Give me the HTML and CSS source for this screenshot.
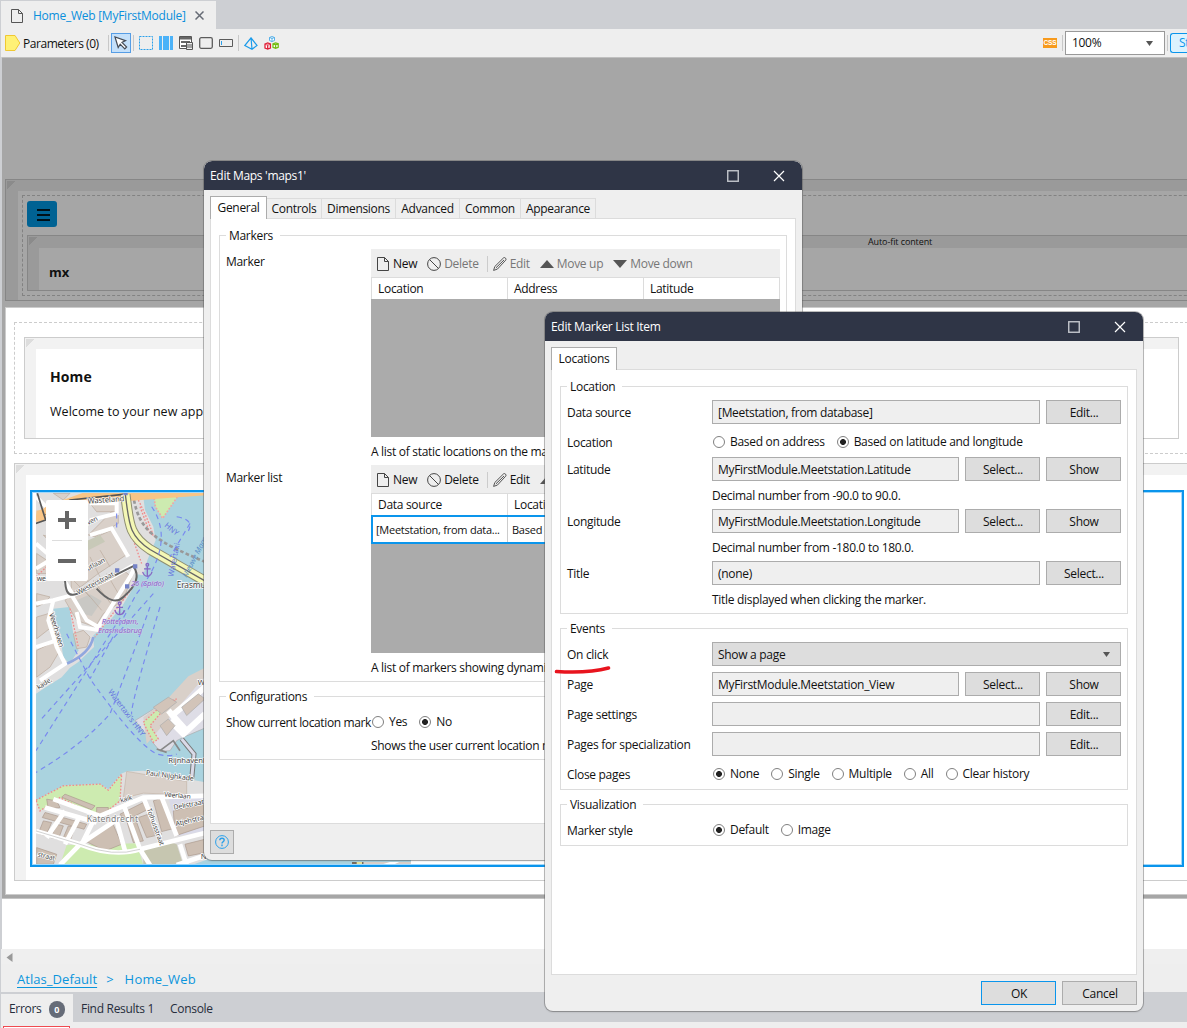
FILE: index.html
```html
<!DOCTYPE html>
<html lang="en">
<head>
<meta charset="utf-8">
<title>Home_Web [MyFirstModule]</title>
<link rel="stylesheet" href="styles.css">
</head>
<body>
<svg class="defs" width="0" height="0" aria-hidden="true">
  <symbol id="doc" viewBox="0 0 12 14"><path d="M.5.5h7l4 4v9H.5zM7.500.5v4h4" fill="none" stroke="currentColor"/></symbol>
  <symbol id="ban" viewBox="0 0 14 14"><circle cx="7" cy="7" r="6.400" fill="none" stroke="currentColor"/><path d="M2.600 2.600l8.800 8.800" stroke="currentColor"/></symbol>
  <symbol id="pencil" viewBox="0 0 14 14"><path d="M.6 13.400l1.200-3.900L10.500.9q1.100-.8 2.100.3.900 1 .1 2L4.400 12.100z M2.900 10.900L11 3" fill="none" stroke="currentColor" stroke-width=".9"/></symbol>
</svg>

<div class="app">
  <header class="doctabs">
    <div class="doctab"><svg class="doc-icon" width="12" height="14"><use href="#doc"/></svg><span>Home_Web [MyFirstModule]</span><svg width="9" height="9" viewBox="0 0 9 9"><path d="M.5.5l8 8M8.500.5l-8 8" stroke="#666b75" stroke-width="1.500"/></svg></div>
  </header>

  <div class="toolbar">
    <svg width="16" height="16" viewBox="0 0 16 16"><path d="M.5.500h9.500l4.800 7.500-4.800 7.500H.5z" fill="#fff176" stroke="#f0c832"/></svg>
    <span class="params">Parameters (0)</span>
    <i class="sep"></i>
    <span class="tool-on"><svg width="16" height="16" viewBox="0 0 16 16"><path d="M2 2l3.200 10.500 2-3.300 4.600 4.600 1.800-1.800-4.600-4.600 3.500-1.800z" fill="#fff" stroke="#454b55" stroke-width="1.200"/></svg></span>
    <i class="sep sep-b"></i>
    <svg class="t1" width="14" height="14"><rect x=".5" y=".5" width="13" height="13" fill="none" stroke="#2ba0ea" stroke-dasharray="2 1"/></svg>
    <svg class="t2" width="14" height="14"><path d="M0 0h3v14H0zM4 0h6v14H4zM11 0h3v14h-3z" fill="#4bb2f8"/></svg>
    <svg class="t3" width="14" height="14" viewBox="0 0 14 14"><path d="M.5.5h12v12H.5z" fill="#fff" stroke="#555"/><path d="M1 1h11v2.500H1zM2 5h9v2H2zM2 9h5v2H2z" fill="#666"/><path d="M7.500 6.500h6v7h-6zM8 9h5M8 11h5" fill="#eee" stroke="#555"/></svg>
    <svg class="t4" width="14" height="12"><rect x=".7" y=".7" width="12.600" height="10.600" rx="1.500" fill="none" stroke="#5b5b5b" stroke-width="1.300"/></svg>
    <svg class="t5" width="14" height="8"><path d="M.5.5h13v7H.5z" fill="none" stroke="#5b5b5b"/><path d="M2.500 2v4" stroke="#2ba0ea"/></svg>
    <i class="sep sep-c"></i>
    <svg class="t6" width="14" height="13" viewBox="0 0 14 13"><path d="M7 .8L.8 8.500 8 12.200l5-3.700zM7 .8l1 11.400" fill="none" stroke="#1b9bea" stroke-width="1.200"/></svg>
    <svg class="t7" width="15" height="14" viewBox="0 0 15 14"><g fill="#fff"><path d="M5.500 1.500L8 .5l2.500 1v3L8 5.500l-2.500-1zM5.500 1.500L8 2.500l2.500-1M8 2.500v3" stroke="#46a9e6" stroke-width=".9"/><path d="M1 8l2.700-1 2.700 1v4l-2.700 1L1 12zM1 8l2.700 1 2.700-1M3.700 9v4" stroke="#e01e37" stroke-width="1.300"/><path d="M9 7.800l2.600-.9 2.600.9v3.500l-2.600.9-2.600-.9zM9 7.800l2.600.9 2.600-.9M11.600 8.700v3.500" stroke="#73bd14" stroke-width="1.300"/></g></svg>
    <span class="grow"></span>
    <span class="css-badge">CSS</span>
    <i class="sep"></i>
    <span class="zoom-box">100%<svg width="8" height="5"><path d="M0 0h7L3.500 5z" fill="#555"/></svg></span>
    <i class="sep sep-d"></i>
    <span class="mode-btn">Structure</span>
  </div>

  <main class="canvas">
    <section class="head-region">
      <div class="block outer">
        <div class="dash dark">
          <div class="burger"><i></i><i></i><i></i></div>
          <div class="block inner">
            <span class="autofit">Auto-fit content</span>
            <div class="block-body"><b>mx</b></div>
          </div>
        </div>
      </div>
    </section>
    <section class="page">
      <div class="dash light"><div class="slot"><div class="slot-body"><h1>Home</h1><p>Welcome to your new app</p></div></div></div>
      <div class="slot map-slot"><div class="slot-body">
        <div class="map">
          <svg class="tiles" width="375" height="372" viewBox="78 96 1125 1116" preserveAspectRatio="none">
            <rect x="78" y="96" width="1125" height="1116" fill="#aad3df"/>
            <path d="M78 96H398L405 150 430 200 437 240 412 300 400 345 382 342 365 390 335 440 300 480 250 525 252 560 205 605 180 622 155 650 105 682 78 700Z" fill="#e0dfdf"/>
            <path d="M430 96H512L458 175 436 140Z" fill="#cdebb0" stroke="#f1a4a4" stroke-width="5" stroke-dasharray="5 5"/>
            <path d="M130 445L178 440 190 520 206 570 178 610 160 590 150 530Z" fill="#aad3df"/>
            <path d="M170 610Q240 580 250 530" stroke="#91a7de" stroke-width="8" fill="none"/>
            <g fill="#d9d0c9" stroke="#b9a99c" stroke-width="2">
              <path d="M235 225l70-70 20 5v30l-70 40zM130 100l50 0-20 20zM180 300l80-70 45-20 50 70-90 60-80 60zM190 400l70-40 80-30 25 20-25 70-60 40-25 40-55-20-35-60zM240 130h80v25h-60zM80 470l35-10 10 40-45 35zM80 570l50-25 20 25-30 50-40 30zM80 280l30 20v40H80zM100 225l60 20v40z"/>
              <path d="M190 520l30-10 20 20-10 30-30 5zM80 400l40 10-20 20-20 10z"/>
            </g>
            <path d="M200 420l40-18 35 20-30 45-40-10z" fill="#c9c8c4"/>
            <path d="M225 245l45-20 15 20-50 25z" fill="#c8c9b8"/>
            <g fill="none" stroke="#b9a99c" stroke-width="2"><path d="M205 320l30 45M240 290l30 60M270 270l30 50M180 350l60 60M290 340l35 60M250 360l60 80M215 380l60 70"/></g>
            <g fill="none" stroke="#fff" stroke-width="12">
              <path d="M78 430L130 420 185 405 230 480 265 500 360 350 375 320M165 365L190 405 300 355 370 315M240 225L305 205 355 290M130 420L115 480 140 560 165 610 90 660M78 560L140 540M78 250L170 330M200 455l10 45 60 10M78 325l50-30M78 110l100 100M240 180l80-20v-30h-80"/>
            </g>
            <g fill="none" stroke="#f08b8b" stroke-width="4" stroke-dasharray="5 5"><path d="M385 120Q420 190 430 230M370 240L395 310M365 385L255 530M180 445L205 560M78 350L120 310M390 140L420 220"/></g>
            <path d="M372 120C390 210 430 240 585 305" fill="none" stroke="#999" stroke-width="8" stroke-dasharray="11 7"/>
            <path d="M78 168Q100 170 120 152L225 114 345 107 480 96 600 88" fill="none" stroke="#f9c586" stroke-width="34"/>
            <path d="M82 100l25 80-30 10M107 165L180 120 340 103" fill="none" stroke="#555" stroke-width="5"/>
            <path d="M346 104C358 190 355 225 420 268L590 365" fill="none" stroke="#8f8f72" stroke-width="31"/>
            <path d="M346 104C358 190 355 225 420 268L590 365" fill="none" stroke="#f4f7b5" stroke-width="25"/>
            <path d="M346 104C358 190 355 225 420 268L590 365" fill="none" stroke="#666" stroke-width="4"/>
            <path d="M165 360C170 440 200 400 370 318Q400 360 340 410 310 440 260 385" fill="none" stroke="#666" stroke-width="6"/>
            <g fill="#7583c7"><path d="M315 324h13v13h-13zM369 312h13v13h-13zM345 372h13v13h-13zM340 94h13v12h-13z"/></g>

            <path d="M590 618L520 690 375 780 450 872 480 870 500 840 520 830 590 800Z" fill="#dedde6" stroke="#aaa" stroke-width="2"/>
            <path d="M400 770l75-58 60-65 50-25v25L410 850z" fill="#d9d0c9"/>
            <path d="M400 785l60-55 40-15-50 45-30 35 25 40-15 10z" fill="#cdebb0" stroke="#f08b8b" stroke-width="4" stroke-dasharray="5 5"/>
            <path d="M480 770l60-50 50-45M480 780l40 40 65-60M475 750l50 55" fill="none" stroke="#fff" stroke-width="18"/>
            <path d="M450 795l25-20 20 20-25 30zM515 740l50-40 20 15-55 50zM430 740l45-30 25 15-45 35z" fill="#d2c4b9" stroke="#aaa" stroke-width="2"/>
            <path d="M515 835L552 880 545 955" fill="none" stroke="#777" stroke-width="15"/><path d="M515 835L552 880 545 955" fill="none" stroke="#dadae8" stroke-width="9"/>
            <path d="M450 870l40-30 20 30M440 865l30 10" fill="none" stroke="#888" stroke-width="5"/>

            <path d="M78 1018L160 975 270 970 295 985 335 938 350 932 400 930 590 965 590 1212 78 1212Z" fill="#e0dfdf"/>
            <path d="M78 1018L160 975 270 970 295 988 335 940 330 1020 280 1060 230 1050 150 1010 90 1050z" fill="#cdebb0" stroke="#f08b8b" stroke-width="4" stroke-dasharray="5 5"/>
            <path d="M150 1212l20-60 210-5 20 65z" fill="#cdebb0"/>
            <path d="M350 932l180 30v40l-130-5-60 15z" fill="#d9d0c9" stroke="#c4b5a8" stroke-width="2"/>
            <path d="M475 1010l110-5v105l-80 15z" fill="#dadae8"/>
            <g fill="#cdbfb3" stroke="#aa998c" stroke-width="2"><path d="M110 1015l30 5 10 20-35 5zM165 1000l90 35-10 12-90-38zM105 1055l125 35-8 15-125-35zM100 1080l25 5-18 40-22-8zM140 1090l20 5-15 40-22-5zM175 1095l20 5-15 40-22-5zM225 1140l80-60 30 70-50 20zM330 1060l70-35 15 20-70 35zM350 1080l25-10 25 70-30 5zM385 1070l30-10 40 60-45 10zM430 1020l25-8 40 90-40 10zM80 1160l60 20-10 30H80zM490 1050l95-20v65l-90 30zM525 1150l60-15v40l-50 10zM260 1040h35v25h-35z"/></g>
            <path d="M400 1170q70-35 100-20l20 62H400z" fill="#c6c6b0"/>
            <g fill="none" stroke="#fff" stroke-width="14"><path d="M78 1110L210 1150Q310 1190 390 1165L590 1115M130 1015L270 1065 400 1010 585 1005M105 1040l155 45M210 1150L330 1070M340 1030L390 1165M400 1010L450 1130M455 1010L500 1125M210 1150L150 1212M165 1050L110 1130M210 1065L165 1150M250 1080L215 1150M320 1080L345 1170M390 1165L420 1212M510 1150L530 1212M500 1212l90-30"/></g>
            <path d="M78 1110L210 1150Q310 1190 390 1165" fill="none" stroke="#bbb" stroke-width="2"/>
            <path d="M545 1212l45-16h405v16z" fill="#aad3df"/>
            <path d="M1026 1203h35v9h-35z" fill="#776b5e"/><path d="M1040 1203h16v9h-16z" fill="#e5e19b"/><path d="M1061 1203h142v9h-142z" fill="#d9d0c9"/><path d="M1110 1212l30-9h28l-20 9z" fill="#fff"/>

            <g fill="none" stroke="#7989ef" stroke-width="3.500" stroke-dasharray="15 12"><path d="M425 140Q500 250 380 400L240 655M450 440Q360 740 365 760M420 440Q370 580 300 760 220 850 78 935M430 400L90 780M345 450L78 870M170 520L240 655Q380 850 440 880 480 890 500 880M540 190L480 290M320 160v50M500 170q60 10 30 50"/></g>
            <g font-family="Noto Sans" font-size="23" fill="#444" stroke="#fff" stroke-width="4" paint-order="stroke">
              <text transform="translate(233 131) rotate(-4)">Wasteland</text>
              <text font-size="20" transform="translate(225 200) rotate(-27)">aven</text>
              <text font-size="21" transform="translate(222 338) rotate(-28)">outlaan</text>
              <text font-size="21" transform="translate(205 404) rotate(-28)">Westerstraat</text>
              <text font-size="21" x="80" y="363">we</text>
              <text font-size="22" transform="translate(117 460) rotate(73)">Veerhaven</text>
              <text x="500" y="383" font-size="25">Erasmusbrug</text>
              <text font-size="20" transform="translate(86 688) rotate(-33)">kade,</text>
              <text x="475" y="906" font-size="23">Rijnhavenbrug</text>
              <text font-size="21" transform="translate(407 943) rotate(7)">Paul Nijghkade</text>
              <text font-size="20" transform="translate(462 1007) rotate(5)">Veerlaan</text>
              <text font-size="21" transform="translate(492 1047) rotate(-11)">Delistraat</text>
              <text font-size="21" transform="translate(498 1096) rotate(-13)">Atjehstraat</text>
              <text font-size="20" transform="translate(410 1045) rotate(70)">Tolhuisstraat</text>
              <text font-size="20" transform="translate(82 1186) rotate(14)">straat</text>
              <text font-size="20" transform="translate(333 1026) rotate(-18)">kaik</text>
              <text x="563" y="672">Wil</text>
              <text x="572" y="1194">N</text>
            </g>
            <text x="230" y="1084" font-family="Noto Sans" font-size="26" fill="#7b7b7b" stroke="#fff" stroke-width="3" paint-order="stroke" textLength="154">Katendrecht</text>
            <g font-family="Noto Sans" font-style="italic" font-size="23" fill="#8461c4" stroke="#ddd8f2" stroke-width="2" paint-order="stroke"><text x="363" y="377">26 (Spido)</text><text x="275" y="490">Rotterdam,</text><text x="264" y="517">Erasmusbrug</text></g>
            <g fill="none" stroke="#8669c4" stroke-width="4"><path d="M412 318v30M402 326h20M398 335q4 13 14 13t14-13M329 433v30M319 441h20M315 450q4 13 14 13t14-13"/><circle cx="412" cy="314" r="4"/><circle cx="329" cy="429" r="4"/></g>
            <g font-family="Noto Sans" font-size="23" fill="#6775de"><text transform="translate(293 694) rotate(53)">Watertaxi's HNY</text><text transform="translate(490 350) rotate(-79)">Watertaxi</text><text transform="translate(462 198) rotate(40)">HNY</text><text fill="#5d8fc9" font-style="italic" transform="translate(530 353) rotate(-62)">Nieuwe Maas</text></g>
          </svg>
          <div class="map-zoom"><span class="plus"></span><span class="minus"></span></div>
        </div>
      </div></div>
    </section>
    <div class="blank"></div>
  </main>

  <div class="hscroll"><svg width="7" height="9"><path d="M6.500 0v9L.5 4.500z" fill="#999"/></svg></div>
  <nav class="crumbs"><u>Atlas_Default</u><span>&gt;</span><span>Home_Web</span></nav>
  <footer class="bottom-tabs"><div class="btab on">Errors<em>0</em></div><div class="btab find">Find Results 1</div><div class="btab">Console</div></footer>
  <div class="bottom-strip"><i></i></div>
</div>

<div class="dialog maps">
  <div class="titlebar"><span>Edit Maps 'maps1'</span><svg class="max" width="12" height="12"><rect x=".75" y=".75" width="10.500" height="10.500" fill="none" stroke="#c3c6cc" stroke-width="1.400"/></svg><svg width="12" height="12"><path d="M1 1l10 10M11 1L1 11" stroke="#fff" stroke-width="1.200"/></svg></div>
  <div class="tabs"><span class="tab active">General</span><span class="tab w-con">Controls</span><span class="tab w-dim">Dimensions</span><span class="tab w-adv">Advanced</span><span class="tab w-com">Common</span><span class="tab w-app">Appearance</span></div>
  <div class="panel">
    <section class="group markers">
      <h2>Markers</h2>
      <div class="mrow"><label>Marker</label><div class="gridbox">
        <div class="gridbar"><span class="gb"><svg width="12" height="14"><use href="#doc"/></svg>New</span><span class="gb off del"><svg width="14" height="14"><use href="#ban"/></svg>Delete</span><span class="gb off edit"><svg width="14" height="14"><use href="#pencil"/></svg>Edit</span><span class="gb off up"><svg width="14" height="8"><path d="M0 8L7 0l7 8z" fill="#555"/></svg>Move up</span><span class="gb off up"><svg width="14" height="8"><path d="M0 0l7 8 7-8z" fill="#555"/></svg>Move down</span></div>
        <div class="gridhead"><span>Location</span><span>Address</span><span>Latitude</span></div>
        <div class="gridfill"></div>
        <p class="hint">A list of static locations on the map.</p>
      </div></div>
      <div class="mrow"><label>Marker list</label><div class="gridbox">
        <div class="gridbar"><span class="gb"><svg width="12" height="14"><use href="#doc"/></svg>New</span><span class="gb del"><svg width="14" height="14"><use href="#ban"/></svg>Delete</span><span class="gb edit"><svg width="14" height="14"><use href="#pencil"/></svg>Edit</span><span class="gb off up"><svg width="14" height="8"><path d="M0 8L7 0l7 8z" fill="#555"/></svg></span></div>
        <div class="gridhead"><span>Data source</span><span>Location</span><span></span></div>
        <div class="gridsel"><span>[Meetstation, from data...</span><span>Based on</span></div>
        <div class="gridfill short"></div>
        <p class="hint">A list of markers showing dynamic</p>
      </div></div>
    </section>
    <section class="group config">
      <h2>Configurations</h2>
      <div class="crow"><label>Show current location mark</label><div class="radios"><span><i class="radio"></i>Yes</span><span><i class="radio sel"></i>No</span></div></div>
      <p>Shows the user current location m</p>
    </section>
  </div>
  <div class="help"><svg width="14" height="14" viewBox="0 0 14 14"><circle cx="7" cy="7" r="6.400" fill="none" stroke="#2ba0ea"/><path d="M4.800 5.300q0-2 2.200-2t2.200 1.800q0 1-1.200 1.700-1 .6-1 1.700M7 9.600v1.600" fill="none" stroke="#2ba0ea" stroke-width="1.400"/></svg></div>
</div>

<div class="dialog item">
  <div class="titlebar"><span>Edit Marker List Item</span><svg class="max" width="12" height="12"><rect x=".75" y=".75" width="10.500" height="10.500" fill="none" stroke="#c3c6cc" stroke-width="1.400"/></svg><svg width="12" height="12"><path d="M1 1l10 10M11 1L1 11" stroke="#fff" stroke-width="1.200"/></svg></div>
  <div class="tabs"><span class="tab active">Locations</span></div>
  <div class="panel">
    <section class="group g-loc">
      <h2>Location</h2>
      <div class="row"><label>Data source</label><div class="field">[Meetstation, from database]</div><button>Edit...</button></div>
      <div class="row radio-row tight"><label>Location</label><div class="radios"><span><i class="radio"></i>Based on address</span><span><i class="radio sel"></i>Based on latitude and longitude</span></div></div>
      <div class="row bare"><label>Latitude</label><div class="field">MyFirstModule.Meetstation.Latitude</div><button>Select...</button><button>Show</button></div>
      <p>Decimal number from -90.0 to 90.0.</p>
      <div class="row bare"><label>Longitude</label><div class="field">MyFirstModule.Meetstation.Longitude</div><button>Select...</button><button>Show</button></div>
      <p>Decimal number from -180.0 to 180.0.</p>
      <div class="row bare"><label>Title</label><div class="field">(none)</div><button>Select...</button></div>
      <p>Title displayed when clicking the marker.</p>
    </section>
    <section class="group g-ev">
      <h2>Events</h2>
      <div class="row"><label>On click</label><div class="field select"><span>Show a page</span><svg width="8" height="5"><path d="M0 0h7L3.500 5z" fill="#555"/></svg></div></div>
      <div class="row"><label>Page</label><div class="field">MyFirstModule.Meetstation_View</div><button>Select...</button><button>Show</button></div>
      <div class="row"><label>Page settings</label><div class="field"></div><button>Edit...</button></div>
      <div class="row"><label>Pages for specialization</label><div class="field"></div><button>Edit...</button></div>
      <div class="row radio-row"><label>Close pages</label><div class="radios"><span><i class="radio sel"></i>None</span><span><i class="radio"></i>Single</span><span><i class="radio"></i>Multiple</span><span><i class="radio"></i>All</span><span><i class="radio"></i>Clear history</span></div></div>
    </section>
    <section class="group g-vis">
      <h2>Visualization</h2>
      <div class="row radio-row"><label>Marker style</label><div class="radios"><span><i class="radio sel"></i>Default</span><span><i class="radio"></i>Image</span></div></div>
    </section>
  </div>
  <div class="actions"><button class="primary">OK</button><button>Cancel</button></div>
  <svg class="mark" width="60" height="12" viewBox="0 0 60 12"><path d="M2.500 6.500Q34 8.500 54.500 3" fill="none" stroke="#e8141e" stroke-width="3.600" stroke-linecap="round"/></svg>
</div>
</body>
</html>
```
FILE: styles.css
```css
* { box-sizing: border-box; }
body { margin: 0; width: 1187px; height: 1028px; overflow: hidden; position: relative; font: 12px/16px "Open Sans", "Noto Sans", sans-serif; letter-spacing: -.3px; color: #111; background: #cdcfd3; }
svg { display: block; flex: none; }
.defs { position: absolute; }
h1, h2, p { margin: 0; font-weight: normal; }
.app { display: flex; flex-direction: column; height: 1028px; }
.app > * { flex: none; }

.doctabs { height: 29px; padding: 1px 0 0 1px; display: flex; }
.doctab { width: 215px; background: #eee; display: flex; align-items: center; color: #0a8fdc; font-size: 12px; letter-spacing: -.25px; padding: 1px 0 0 10px; white-space: nowrap; }
.doctab .doc-icon { color: #555; margin-right: 10px; }
.doctab span { width: 162px; }
.toolbar { height: 28px; margin-left: 1px; background: #eee; display: flex; align-items: center; padding-left: 4px; overflow: hidden; white-space: nowrap; }
.params { width: 76px; margin: 1px 9px 0 2px; padding-top: 1px; letter-spacing: -.45px; }
.sep { flex: none; width: 1px; height: 16px; background: #c8c8c8; }
.tool-on { width: 20px; height: 20px; margin: 0 2px; background: #c4e0fa; border: 1px solid #569de5; padding: 1px; }
.sep-b { margin-right: 5px; }
.t1, .t2, .t3, .t4 { margin-right: 6px; }
.t5 { margin-right: 5px; }
.sep-c { margin-right: 5px; }
.t6 { margin-right: 6px; }
.grow { flex: 1; }
.css-badge { width: 14px; height: 10px; background: #f79a1c; color: #fff; font: bold 6.500px/10px "Liberation Sans", sans-serif; letter-spacing: -.2px; text-align: center; margin-right: 5px; }
.zoom-box { flex: none; width: 100px; height: 24px; margin-left: 2px; border: 1px solid #999; background: #fff; display: flex; align-items: center; justify-content: space-between; padding: 0 10px 0 6px; font-size: 12px; }
.sep-d { margin: 0 2px; }
.mode-btn { flex: none; width: 17px; height: 20px; overflow: hidden; border: 1px solid #0a95ec; border-right: 0; border-radius: 3px 0 0 3px; background: #dbf2fe; color: #0a95ec; padding-left: 8px; line-height: 18px; }

.canvas { height: 892px; margin-left: 2px; background: #a6a6a6; border-top: 1px solid #c0c0c0; overflow: hidden; display: flex; flex-direction: column; }
.head-region { height: 249px; padding: 121px 0 0 3px; }
.block { border: 1px solid #868686; border-right: 0; background: #9a9a9a linear-gradient(135deg, #8b8b8b 6px, transparent 6px) 1px 1px / 10px 10px no-repeat; position: relative; }
.outer { height: 122px; padding: 15px 0 0 16px; }
.outer > .dash { width: 1300px; box-shadow: 0 0 0 4px #a6a6a6; }
.dash.dark { height: 101px; border: 1px dashed #828282; padding: 5px 4px 0; background: #a6a6a6; }
.burger { width: 30px; height: 26px; margin-bottom: 8px; border-radius: 3px; background: #006293; display: grid; gap: 3px; align-content: center; justify-content: center; padding: 1px 0 0 2px; }
.burger i { width: 13px; height: 2px; background: #001018; }
.inner { height: 56px; padding: 0 0 0 11px; display: flex; flex-direction: column; }
.autofit { height: 12px; font-size: 9px; line-height: 12px; padding-left: 829px; letter-spacing: -.1px; flex: none; }
.block-body { flex: 1; background: #a6a6a6; padding: 16px 10px 0; font-size: 13px; letter-spacing: 0; }
.page { height: 588px; flex: none; margin-left: 3px; background: #fff; border: 1px solid #ccc; border-right: 0; padding: 14px 0 0 8px; }
.dash.light { width: 1174px; height: 132px; border: 1px dashed #ccc; padding: 14px 0 0 9px; }
.slot { width: 1155px; height: 102px; border: 1px solid #ccc; background: #f2f2f2 linear-gradient(135deg, #ddd 6px, transparent 6px) 1px 1px / 10px 10px no-repeat; padding: 11px 0 0 11px; }
.slot-body { height: 89px; background: #fff; padding: 20px 14px; font-size: 12.500px; }
.slot-body h1 { font: bold 14px/16px "Open Sans", sans-serif; letter-spacing: .1px; }
.slot-body p { padding-top: 19px; letter-spacing: .05px; }
.map-slot { margin-top: 9px; height: 418px; width: 1190px; }
.map-slot .slot-body { height: 405px; padding: 15px 0 0 4px; }
.map { position: relative; width: 1154px; height: 377px; border: 2px solid #0a95ec; outline: 1px solid #a2d8fa; outline-offset: -3px; padding: 0 0 0 4px; }
.tiles { height: 373px; }
.map-zoom { position: absolute; left: 14px; top: 8px; width: 42px; height: 81px; border-radius: 2px; background: #fff; display: grid; grid-template-rows: 1fr 1fr; place-items: center; }
.map-zoom::after { content: ""; position: absolute; left: 6px; right: 6px; top: 40px; height: 1px; background: #ddd; }
.plus, .minus { width: 18px; height: 18px; background: linear-gradient(#666, #666) center / 18px 4px no-repeat; }
.plus { background: linear-gradient(#666, #666) center / 18px 4px no-repeat, linear-gradient(#666, #666) center / 4px 18px no-repeat; }
.blank { flex: 1; margin: 3px 0 0 -1px; background: #fff; border-top: 1px solid #c4c4c4; }

.hscroll { height: 15px; margin-left: 1px; background: #efefef; padding: 4px 5px 0; }
.crumbs { height: 28px; margin-left: 1px; background: #eee; color: #0a95dc; font-size: 13px; letter-spacing: .05px; display: flex; align-items: center; gap: 9px; padding: 2px 16px 0; }
.crumbs u { text-underline-offset: 3px; }
.crumbs span:last-child { margin-left: 2px; letter-spacing: .2px; }
.bottom-tabs { height: 30px; display: flex; padding: 2px 0 0 1px; color: #262d3c; }
.btab { display: flex; align-items: center; padding: 2px 8px 0; white-space: nowrap; }
.btab.on { width: 72px; background: #eee; gap: 7px; }
.find { width: 89px; }
.btab em { width: 17px; height: 17px; border-radius: 8px; background: #666c78; color: #fff; font: bold 9px/17px "Open Sans", sans-serif; text-align: center; }
.bottom-strip { height: 6px; margin-left: 1px; background: #eee; padding: 4px 2px 0; }
.bottom-strip i { display: block; width: 67px; height: 2px; background: #fff; border: 1px solid #f04a50; border-bottom: 0; }

.dialog { position: absolute; width: 598px; background: #efefef; border-radius: 8px; box-shadow: 0 0 0 1px rgba(90,90,90,.4), 0 1px 2px rgba(0,0,0,.2); white-space: nowrap; display: flex; flex-direction: column; padding: 0 6px; overflow: hidden; }
.maps { left: 204px; top: 161px; height: 699px; }
.item { left: 545px; top: 312px; height: 699px; overflow: visible; }
.titlebar { height: 29px; flex: none; margin: 0 -6px; background: #2f3546; color: #fff; border-radius: 8px 8px 0 0; display: flex; align-items: center; padding: 0 17px 0 6px; }
.titlebar span { flex: 1; }
.titlebar .max { margin-right: 34px; }
.tabs { height: 29px; flex: none; display: flex; align-items: flex-end; padding-top: 6px; margin-bottom: -1px; position: relative; }
.tab { height: 21px; border: 1px solid #dcdcdc; border-left: 0; line-height: 20px; text-align: center; }
.tab.active { width: 57px; height: 23px; line-height: 22px; border: 1px solid #acacac; border-bottom: 0; background: #fff; }
.item .tab.active { width: 66px; }
.w-con { width: 55px; } .w-dim { width: 74px; } .w-adv { width: 64px; } .w-com { width: 61px; } .w-app { width: 75px; }
.panel { border: 1px solid #dcdcdc; background: #fff; padding: 16px 8px; height: 606px; flex: none; }
.group { border: 1px solid #dcdcdc; margin-bottom: 14px; padding: 0 6px; }
.group h2 { width: fit-content; height: 16px; margin-top: -8px; padding: 0 7px 0 3px; background: #fff; font-size: 12px; }
.g-loc { height: 228px; }
.g-ev { height: 162px; }
.g-vis { height: 42px; }
.row { display: flex; gap: 6px; height: 24px; margin-bottom: 6px; }
.group h2 + .row { margin-top: 5px; }
.row label { width: 139px; line-height: 26px; }
.row.tight { margin-bottom: 3px; }
.row.bare { margin: 0; }
.field { flex: 1; border: 1px solid #acacac; background: #efefef; padding: 0 5px; line-height: 24px; }
.select { background: #ddd; display: flex; justify-content: space-between; align-items: center; padding-right: 9px; }
.select span { padding-top: 2px; }
button { width: 75px; height: 24px; padding: 2px 0 0 1px; border: 1px solid #acacac; background: #ddd; color: #111; font: inherit; letter-spacing: inherit; }
.group p { padding: 7px 0 5px 145px; }
.radios { display: flex; align-items: center; gap: 11px; }
.radios span { display: flex; align-items: center; gap: 5px; }
.radio { width: 12px; height: 12px; margin-left: 1px; border: 1px solid #808080; border-radius: 50%; background: #fff; }
.radio.sel { background: radial-gradient(circle, #222 2.600px, #fff 3.300px); }
.actions { display: flex; justify-content: flex-end; gap: 6px; padding-top: 6px; }
.primary { border-color: #0a95ec; }
.mark { position: absolute; left: 9px; top: 353px; }

.markers { height: 447px; }
.mrow { display: flex; height: 216px; }
.markers h2 { margin-bottom: 5px; }
.mrow label { width: 145px; padding-top: 5px; }
.gridbox { width: 409px; }
.gridbar { height: 28px; background: #eee; display: flex; align-items: center; padding: 1px 6px 0; }
.gb { display: flex; align-items: center; gap: 4px; margin-right: 10px; }
.gb svg { color: #444; }
.gb.off { color: #777; }
.gb.del { gap: 3px; margin-right: 8px; }
.edit { border-left: 1px solid #ccc; padding-left: 5px; gap: 3px; }
.gb.up { gap: 3px; }
.gridhead { height: 22px; display: flex; border: 1px solid #dcdcdc; border-bottom: 0; }
.gridhead span { flex: none; width: 136px; border-right: 1px solid #dcdcdc; padding: 3px 6px; }
.gridhead span:last-child { border: 0; }
.gridfill { height: 138px; background: #ababab; }
.gridfill.short { height: 109px; }
.gridsel { height: 29px; border: 2px solid #0a95ec; display: flex; font-size: 11px; letter-spacing: -.25px; }
.gridsel span { width: 135px; border-right: 1px solid #ccc; padding: 5px 3px; }
.gridsel span:last-child { padding-left: 4px; }
.markers p.hint { padding: 7px 0 0; }
.config { height: 64px; }
.config h2 + .crow { margin-top: 5px; }
.crow { display: flex; height: 24px; align-items: center; }
.crow label { width: 145px; padding-top: 1px; letter-spacing: -.37px; }
.config p { padding-top: 4px; }
.help { width: 24px; height: 24px; margin-top: 6px; border: 1px solid #acacac; background: #ddd; padding: 4px; }
```
